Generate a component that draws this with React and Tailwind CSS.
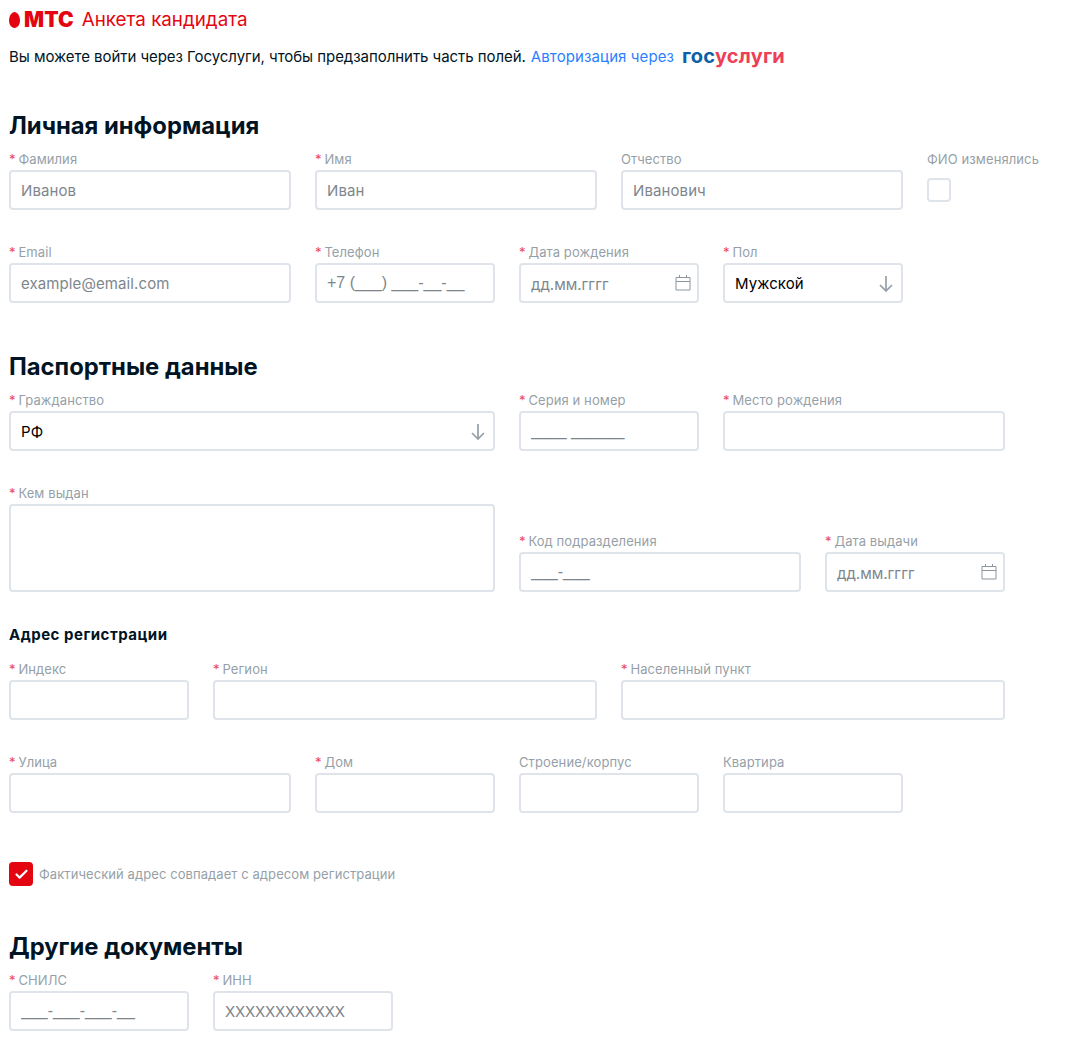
import { Check } from "lucide-react";

const Field = ({ label, required, className = "", children }) => (
  <div className={className}>
    <label className="block h-[21px] whitespace-nowrap text-[13px] leading-[20px] tracking-[0.1px] text-[#969fa8]">
      {required && <span className="mr-[-1px] text-[#ea4a52]">* </span>}
      {label}
    </label>
    {children}
  </div>
);

const inputCls =
  "block h-10 w-full rounded border-2 border-[#dfe3ea] bg-white px-[10px] text-black outline-none placeholder:text-[#7e868d]";

const normalText = "text-[15px] tracking-[0.1px]";
// маски с подчёркиваниями: у Liberation Sans они шире и идут сплошной линией
const maskText = "font-['Liberation_Sans',sans-serif] text-base";

const Input = ({ label, required = true, placeholder, className, inputClass = normalText }) => (
  <Field label={label} required={required} className={className}>
    <input type="text" placeholder={placeholder} className={`${inputCls} ${inputClass}`} />
  </Field>
);

const DateInput = ({ label, className }) => (
  <Field label={label} required className={className}>
    <div className="relative">
      <input type="text" placeholder="дд.мм.гггг" className={`${inputCls} pt-[2px] text-[15px]`} />
      <svg width="16" height="16" viewBox="0 0 16 16" fill="none" stroke="#8d969f" className="absolute right-[8px] top-[12px]">
        <path d="M1 2.5h14v12.5H1zM1 6.5h14M4.5 0v3M11.5 0v3" />
      </svg>
    </div>
  </Field>
);

const Select = ({ label, value, className }) => (
  <Field label={label} required className={className}>
    <div className="relative">
      <select defaultValue={value} className={`${inputCls} ${normalText} appearance-none pt-[2px]`}>
        <option>{value}</option>
      </select>
      <svg width="14" height="16" viewBox="0 0 14 16" fill="none" stroke="#969fa8" strokeWidth="1.7" className="pointer-events-none absolute right-[10px] top-[13px]">
        <path d="M7 0v15M1 9l6 6 6-6" />
      </svg>
    </div>
  </Field>
);

const Heading = ({ children, className = "" }) => (
  <h2 className={`h-8 text-[23.8px] font-bold leading-[34px] text-[#001424] ${className}`}>{children}</h2>
);

const Row = ({ children, className = "" }) => (
  <div className={`grid w-[996px] grid-cols-10 gap-x-6 gap-y-8 ${className}`}>{children}</div>
);

const App = () => {
  return (
    <div className="min-h-[1058px] overflow-hidden bg-white pb-[27px] pl-[9px] pt-2 font-['Inter',sans-serif]">
      {/* Header */}
      <div className="flex h-6 items-center">
        <svg width="11" height="16" viewBox="0 0 12 16" preserveAspectRatio="none" className="mt-[-1px]">
          <path d="M6 0C3 0 0 3.6 0 8.6 0 12.6 2.4 16 6 16s6-3.4 6-7.4C12 3.6 9 0 6 0Z" fill="#e30611" />
        </svg>
        <span className="ml-1 text-[21px] font-black leading-6 tracking-[0.1px] text-[#e30611]">МТС</span>
        <span className="ml-2 text-[18.8px] leading-6 text-[#e30611]">Анкета кандидата</span>
      </div>
      <p className="mt-[13px] flex h-6 items-center whitespace-nowrap text-[15px] leading-6 tracking-[-0.05px] text-[#001424]">
        Вы можете войти через Госуслуги, чтобы предзаполнить часть полей.
        <a href="#" className="ml-[5px] tracking-[0.1px] text-[#2b7fff]">Авторизация через</a>
        <span className="ml-2 mt-[-3px] text-[20px] font-bold tracking-[0.2px]">
          <span className="text-[#0d5fa8]">гос</span>
          <span className="text-[#ee3f58]">услуги</span>
        </span>
      </p>

      {/* Личная информация */}
      <Heading className="mt-10 mb-2">Личная информация</Heading>
      <Row>
        <Input label="Фамилия" placeholder="Иванов" className="col-span-3" />
        <Input label="Имя" placeholder="Иван" className="col-span-3" />
        <Input label="Отчество" required={false} placeholder="Иванович" className="col-span-3" />
        <Field label="ФИО изменялись" className="col-span-1">
          <div className="mt-2 h-6 w-6 rounded border-2 border-[#dfe3ea]" />
        </Field>
        <Input label="Email" placeholder="example@email.com" className="col-span-3" />
        <Input label="Телефон" placeholder="+7 (___) ___-__-__" className="col-span-2" inputClass={maskText} />
        <DateInput label="Дата рождения" className="col-span-2" />
        <Select label="Пол" value="Мужской" className="col-span-2" />
      </Row>

      {/* Паспортные данные */}
      <Heading className="mt-[47px] mb-2">Паспортные данные</Heading>
      <Row>
        <Select label="Гражданство" value="РФ" className="col-span-5" />
        <Input label="Серия и номер" placeholder="____ ______" className="col-span-2" inputClass={maskText} />
        <Input label="Место рождения" className="col-span-3" />
        <Field label="Кем выдан" required className="col-span-5">
          <textarea className="block h-[88px] w-full resize-none rounded border-2 border-[#dfe3ea] outline-none" />
        </Field>
        <Input label="Код подразделения" placeholder="___-___" className="col-span-3 self-end" inputClass={maskText} />
        <DateInput label="Дата выдачи" className="col-span-2 self-end" />
      </Row>

      {/* Адрес */}
      <h3 className="mt-[33px] mb-[14px] h-5 text-[15px] font-bold leading-5 tracking-[0.5px] text-[#001424]">Адрес регистрации</h3>
      <Row>
        <Input label="Индекс" className="col-span-2" />
        <Input label="Регион" className="col-span-4" />
        <Input label="Населенный пункт" className="col-span-4" />
        <Input label="Улица" className="col-span-3" />
        <Input label="Дом" className="col-span-2" />
        <Input label="Строение/корпус" required={false} className="col-span-2" />
        <Input label="Квартира" required={false} className="col-span-2" />
      </Row>

      <div className="mt-[49px] flex h-6 items-center gap-[6px]">
        <div className="flex h-6 w-6 items-center justify-center rounded bg-[#e30611]">
          <Check size={15} strokeWidth={3.5} className="text-white" />
        </div>
        <span className="mt-[1px] text-[13px] tracking-[0.08px] text-[#969fa8]">Фактический адрес совпадает с адресом регистрации</span>
      </div>

      {/* Другие документы */}
      <Heading className="mt-11 mb-2">Другие документы</Heading>
      <Row>
        <Input label="СНИЛС" placeholder="___-___-___-__" className="col-span-2" inputClass={maskText} />
        <Input label="ИНН" placeholder="XXXXXXXXXXXX" className="col-span-2" inputClass="text-[15px] tracking-[-0.25px]" />
      </Row>
    </div>
  );
};

export default App;
